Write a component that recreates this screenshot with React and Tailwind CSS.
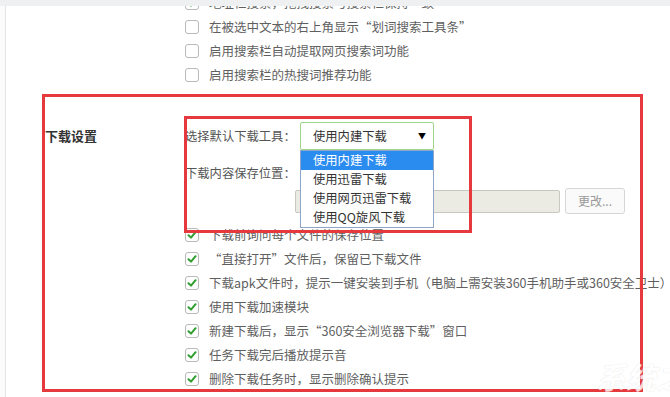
import React from 'react';

const topRows = [
  { text: '地址栏搜索，拖拽搜索与搜索栏保持一致', checked: true },
  { text: '在被选中文本的右上角显示“划词搜索工具条”', checked: false },
  { text: '启用搜索栏自动提取网页搜索词功能', checked: false },
  { text: '启用搜索栏的热搜词推荐功能', checked: false },
];

const downloadRows = [
  '下载前询问每个文件的保存位置',
  '“直接打开”文件后，保留已下载文件',
  '下载apk文件时，提示一键安装到手机（电脑上需安装360手机助手或360安全卫士）',
  '使用下载加速模块',
  '新建下载后，显示“360安全浏览器下载”窗口',
  '任务下载完后播放提示音',
  '删除下载任务时，显示删除确认提示',
];

const tools = ['使用内建下载', '使用迅雷下载', '使用网页迅雷下载', '使用QQ旋风下载'];

const Checkbox = ({ checked }) => (
  <span className="flex h-[14px] w-[14px] shrink-0 items-center justify-center rounded-[3px] border border-[#b9b9b9] bg-white">
    {checked && (
      <svg width="10" height="10" viewBox="0 0 10 10">
        <path d="M1.5 5.2 L4 7.6 L8.6 2.2" fill="none" stroke="#2f9e2f" strokeWidth="2" strokeLinecap="round" strokeLinejoin="round" />
      </svg>
    )}
  </span>
);

const Row = ({ text, checked }) => (
  <div className="flex h-6 items-center gap-[10px] whitespace-nowrap">
    <Checkbox checked={checked} />
    <span>{text}</span>
  </div>
);

export default function App() {
  return (
    <div
      className="relative h-[397px] w-[670px] overflow-hidden bg-white text-[12.5px] text-[#5f5f5f]"
      style={{ fontFamily: '"Noto Sans CJK SC", "Noto Sans", sans-serif' }}
    >
      <div className="relative z-10 h-[6px] bg-[#eef0f1]" />
      <div className="flex h-[391px]">
        <div className="w-[6px] shrink-0 border-r border-[#e2e4e6] bg-[#fbfbfb]" />
        <div className="flex-1">
          {/* search options (scrolled, first row clipped) */}
          <div className="-mt-[15px] pl-[179px]">
            {topRows.map((r, i) => (
              <Row key={i} text={r.text} checked={r.checked} />
            ))}
          </div>

          {/* download settings */}
          <div className="mt-[35px] flex">
            <div className="w-[179px] shrink-0 pl-[39px] pt-[4px] text-[13px] font-bold text-[#333]">下载设置</div>
            <div className="flex-1">
              <div className="flex h-[28px] items-center">
                <span className="w-[115px] shrink-0 text-[12.3px] text-[#555]">选择默认下载工具：</span>
                <div className="relative h-[28px] w-[134px]">
                  <div className="flex h-full items-center justify-between rounded-[2px] border border-[#9ed58a] bg-white pl-[12px] pr-[7px] text-[12.3px] text-[#333]">
                    <span>使用内建下载</span>
                    <span className="text-[8px] text-black">▼</span>
                  </div>
                  <div className="absolute left-0 top-full z-20 w-[134px] border border-[#8ea6c8] bg-white text-[12.3px] text-[#333]">
                    {tools.map((t, i) => (
                      <div
                        key={i}
                        className={i === 0 ? 'flex h-[19px] items-center bg-[#2b8cf0] pl-[12px] text-white' : 'flex h-[19px] items-center pl-[12px]'}
                      >
                        {t}
                      </div>
                    ))}
                  </div>
                </div>
              </div>
              <div className="mt-[13px] flex h-[20px] items-center text-[12.3px] text-[#555]">下载内容保存位置：</div>
              <div className="mt-[5px] flex h-[26px] items-center pl-[110px]">
                <div className="h-[23px] w-[265px] rounded-[2px] border border-[#c8c8c0] bg-[#ebebe4]" />
                <button className="ml-[5px] h-[26px] w-[60px] rounded-[3px] border border-[#d6d6d6] bg-[#fafafa] text-[12px] text-[#999]">
                  更改...
                </button>
              </div>
              <div className="mt-[9px]">
                {downloadRows.map((t, i) => (
                  <Row key={i} text={t} checked />
                ))}
              </div>
            </div>
          </div>
        </div>
      </div>

      {/* red annotation frames */}
      <div className="pointer-events-none absolute left-[42px] top-[94px] z-30 h-[298px] w-[601px] border-[3px] border-[#e6393d]" />
      <div className="pointer-events-none absolute left-[184px] top-[116px] z-30 h-[117px] w-[288px] border-[3px] border-[#e6393d]" />

      {/* watermark */}
      <div className="pointer-events-none absolute left-[596px] top-[354px] z-40 whitespace-nowrap text-[30px] font-bold italic text-white opacity-80 [text-shadow:0_0_1px_#d4d4d4]">
        系统之家
      </div>
    </div>
  );
}
